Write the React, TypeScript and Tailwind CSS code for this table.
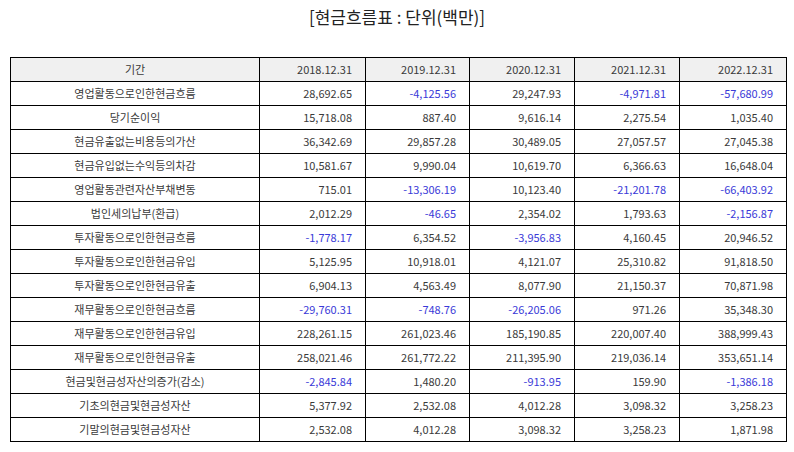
const headers = ["기간", "2018.12.31", "2019.12.31", "2020.12.31", "2021.12.31", "2022.12.31"];

const rows: [string, string[]][] = [
  ["영업활동으로인한현금흐름", ["28,692.65", "-4,125.56", "29,247.93", "-4,971.81", "-57,680.99"]],
  ["당기순이익", ["15,718.08", "887.40", "9,616.14", "2,275.54", "1,035.40"]],
  ["현금유출없는비용등의가산", ["36,342.69", "29,857.28", "30,489.05", "27,057.57", "27,045.38"]],
  ["현금유입없는수익등의차감", ["10,581.67", "9,990.04", "10,619.70", "6,366.63", "16,648.04"]],
  ["영업활동관련자산부채변동", ["715.01", "-13,306.19", "10,123.40", "-21,201.78", "-66,403.92"]],
  ["법인세의납부(환급)", ["2,012.29", "-46.65", "2,354.02", "1,793.63", "-2,156.87"]],
  ["투자활동으로인한현금흐름", ["-1,778.17", "6,354.52", "-3,956.83", "4,160.45", "20,946.52"]],
  ["투자활동으로인한현금유입", ["5,125.95", "10,918.01", "4,121.07", "25,310.82", "91,818.50"]],
  ["투자활동으로인한현금유출", ["6,904.13", "4,563.49", "8,077.90", "21,150.37", "70,871.98"]],
  ["재무활동으로인한현금흐름", ["-29,760.31", "-748.76", "-26,205.06", "971.26", "35,348.30"]],
  ["재무활동으로인한현금유입", ["228,261.15", "261,023.46", "185,190.85", "220,007.40", "388,999.43"]],
  ["재무활동으로인한현금유출", ["258,021.46", "261,772.22", "211,395.90", "219,036.14", "353,651.14"]],
  ["현금및현금성자산의증가(감소)", ["-2,845.84", "1,480.20", "-913.95", "159.90", "-1,386.18"]],
  ["기초의현금및현금성자산", ["5,377.92", "2,532.08", "4,012.28", "3,098.32", "3,258.23"]],
  ["기말의현금및현금성자산", ["2,532.08", "4,012.28", "3,098.32", "3,258.23", "1,871.98"]],
];

export default function App() {
  return (
    <div className="w-[794px] h-[452px] bg-white text-[#3a3a3a] font-['Noto_Sans_CJK_KR','Noto_Sans',sans-serif]">
      <p className="pt-[5px] text-center text-[17px] leading-[24px] text-[#222]">[현금흐름표 : 단위(백만)]</p>
      <table className="mt-[28px] ml-[10px] w-[776px] table-fixed border-collapse text-[11px]">
        <colgroup>
          <col className="w-[249px]" />
          <col className="w-[106px]" />
          <col className="w-[104px]" />
          <col className="w-[105px]" />
          <col className="w-[105px]" />
          <col className="w-[107px]" />
        </colgroup>
        <thead>
          <tr className="h-[24px] bg-[#f0f0f0]">
            {headers.map((h, i) => (
              <th
                key={h}
                className={`border border-black font-normal p-0 leading-none ${i === 0 ? "text-center" : "text-right pr-[13px]"}`}
              >
                {h}
              </th>
            ))}
          </tr>
        </thead>
        <tbody>
          {rows.map(([label, vals]) => (
            <tr key={label} className="h-[24px]">
              <td className="border border-black text-center p-0 leading-none">{label}</td>
              {vals.map((v, i) => (
                <td
                  key={i}
                  className={`border border-black text-right p-0 pr-[13px] leading-none ${v.startsWith("-") ? "text-[#3a3ad8]" : ""}`}
                >
                  {v}
                </td>
              ))}
            </tr>
          ))}
        </tbody>
      </table>
    </div>
  );
}
